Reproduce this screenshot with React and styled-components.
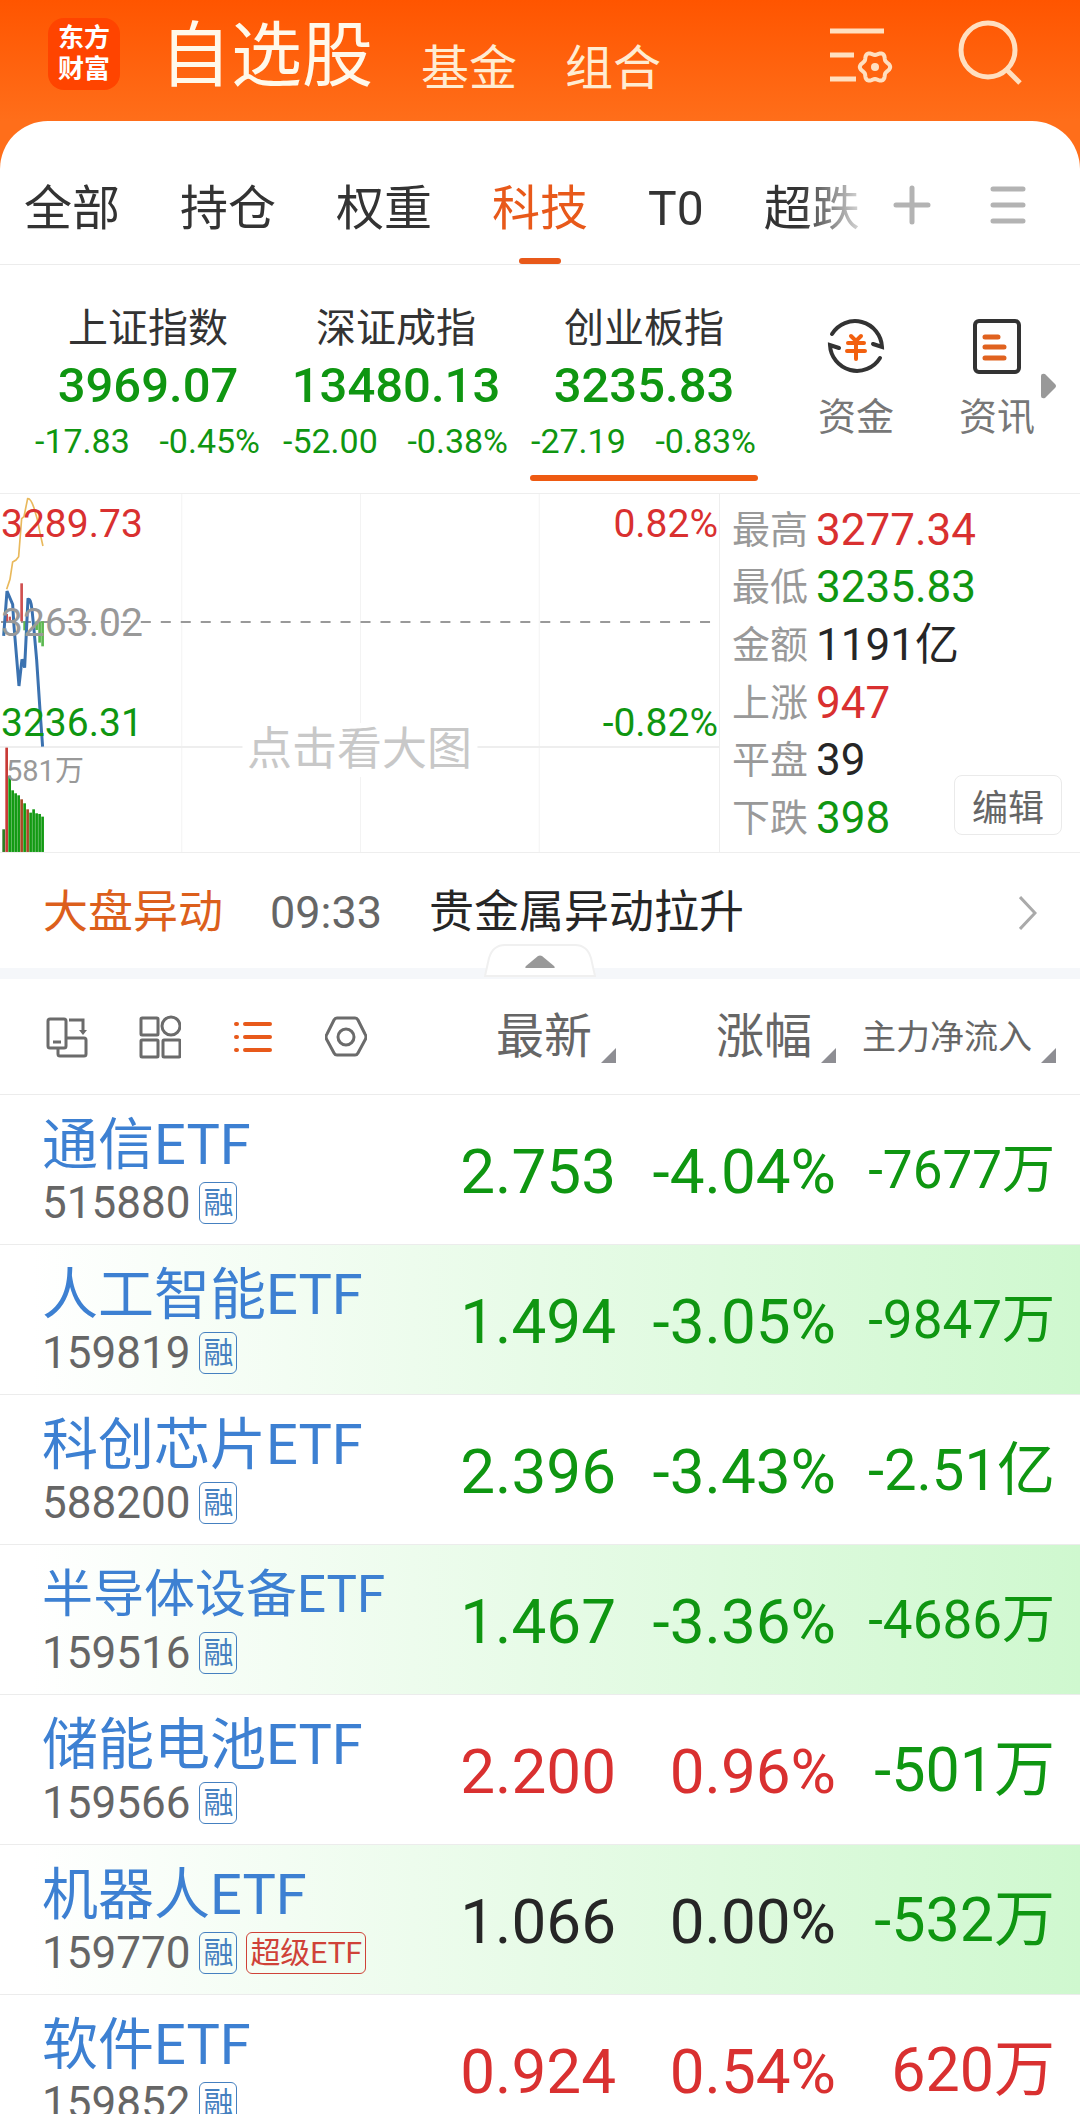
import React, { useState } from "react";
import styled, { createGlobalStyle } from "styled-components";

const GREEN = "#0f9611";
const RED = "#d93030";
const ORANGE = "#e8591a";

const tones = { up: RED, down: GREEN, flat: "#262626", muted: "#999" };

const GlobalStyle = createGlobalStyle`
  * {
    box-sizing: border-box;
  }
  body {
    margin: 0;
    background: #fff;
    color: #333;
    font-family: Roboto, "Noto Sans CJK SC", sans-serif;
  }
  button {
    border: 0;
    padding: 0;
    background: none;
    color: inherit;
    font: inherit;
    cursor: pointer;
  }
  svg {
    display: block;
  }
`;

const StyledPage = styled.div`
  height: 100vh;
  overflow: hidden;
`;

/* header */

const StyledTop = styled.div`
  background: linear-gradient(#ff5500, #ff6e1a 121px);
`;

const StyledHeader = styled.header`
  display: flex;
  align-items: flex-start;
  height: 121px;
  padding: 14px 58px 0 48px;
`;

const StyledLogo = styled.div`
  width: 72px;
  height: 72px;
  margin: 4px 40px 0 0;
  padding: 5px 10px;
  border-radius: 16px;
  background: #ff4400;
  color: #fff;
  font-size: 26px;
  font-weight: 700;
  line-height: 31px;
`;

const StyledMainNav = styled.nav`
  display: flex;
  align-items: flex-end;
  gap: 48px;
`;

const StyledMainTab = styled.button`
  color: ${(p) => (p.$active ? "#fff8ea" : "#ffecd2")};
  font-size: ${(p) => (p.$active ? 71 : 48)}px;
  line-height: ${(p) => (p.$active ? 84 : 58)}px;
`;

const StyledHeaderActions = styled.div`
  display: flex;
  gap: 64px;
  margin: 4px 0 0 auto;
`;

/* group tabs */

const StyledTabBar = styled.div`
  display: flex;
  align-items: center;
  height: 144px;
  padding-right: 54px;
  border-bottom: 1px solid #ececec;
  border-radius: 48px 48px 0 0;
  background: #fff;
`;

const StyledTabs = styled.nav`
  display: flex;
  flex: 1;
  gap: 60px;
  height: 143px;
  padding-left: 24px;
  overflow: hidden;
  mask-image: linear-gradient(
    to right,
    #000 calc(100% - 60px),
    rgba(0, 0, 0, 0.2)
  );
`;

const StyledTab = styled.button`
  display: flex;
  flex: none;
  flex-direction: column;
  align-items: center;
  padding-top: 58px;
  color: ${(p) => (p.$active ? ORANGE : "#333")};
  font-size: 48px;
  line-height: 60px;

  &::after {
    content: "";
    width: 42px;
    height: 6px;
    margin-top: 19px;
    border-radius: 3px;
    background: ${(p) => (p.$active ? ORANGE : "transparent")};
  }
`;

const StyledTabTools = styled.div`
  display: flex;
  gap: 59px;
  padding: 24px 0 0 33px;
`;

/* indices */

const StyledIndexBar = styled.section`
  display: flex;
  align-items: flex-start;
  padding: 38px 24px 12px 34px;
`;

const StyledIndexList = styled.div`
  display: flex;
  gap: 20px;
`;

const StyledIndex = styled.button`
  width: 228px;
  color: ${GREEN};
  text-align: center;

  &::after {
    content: "";
    display: block;
    height: 6px;
    margin-top: 10px;
    border-radius: 3px;
    background: ${(p) => (p.$active ? "#ee5a12" : "transparent")};
  }

  > .name {
    color: #333;
    font-size: 40px;
    line-height: 52px;
  }

  > .value {
    font-size: 49px;
    font-weight: 500;
    line-height: 62px;
  }

  > .change {
    display: flex;
    justify-content: space-between;
    padding: 0 2px 0 1px;
    font-size: 34px;
    line-height: 48px;
  }
`;

const StyledShortcuts = styled.div`
  display: flex;
  gap: 65px;
  margin: 13px 6px 0 auto;
`;

const StyledShortcut = styled.button`
  display: flex;
  flex-direction: column;
  align-items: center;
  gap: 17px;
  color: #777;
  font-size: 38px;
  line-height: 48px;
`;

const StyledMore = styled.button`
  align-self: center;
  margin-bottom: 12px;
`;

/* chart and stats */

const StyledMarket = styled.section`
  display: flex;
  height: 360px;
  border: solid #eee;
  border-width: 1px 0;
`;

const StyledChart = styled.div`
  position: relative;
  width: 66.67%;
  border-right: 1px solid #eee;

  > svg {
    width: 100%;
    height: 100%;
  }
`;

const StyledChartLabel = styled.span`
  position: absolute;
  top: ${(p) => p.$top}px;
  ${(p) => (p.$right ? "right: 1px" : "left: 1px")};
  color: ${(p) => tones[p.$tone]};
  font-size: 39px;
  line-height: 46px;
`;

const StyledVolumeLabel = styled.span`
  position: absolute;
  top: 260px;
  left: 6px;
  color: #999;
  font-size: 29px;
  line-height: 34px;
`;

const StyledChartHint = styled.span`
  position: absolute;
  top: 229px;
  left: 50%;
  padding: 0 5px;
  background: #fff;
  color: #c8c8c8;
  font-size: 45px;
  line-height: 54px;
  white-space: nowrap;
  transform: translateX(-50%);
`;

const StyledStats = styled.div`
  display: flex;
  flex: 1;
  align-items: flex-end;
  justify-content: space-between;
  padding: 0 18px 0 12px;
`;

const StyledStatList = styled.dl`
  display: grid;
  grid-template-columns: auto auto;
  grid-auto-rows: 1fr;
  column-gap: 8px;
  align-items: center;
  height: 100%;
  margin: 0;
  padding: 7px 0 5px;
  line-height: 56px;
  white-space: nowrap;

  > dt {
    color: #999;
    font-size: 38px;
  }
`;

const StyledStatValue = styled.dd`
  margin: 0;
  color: ${(p) => tones[p.$tone]};
  font-size: 44px;
`;

const StyledEdit = styled.button`
  width: 108px;
  height: 60px;
  margin: 0 0 17px -60px;
  border: 1px solid #eaeaea;
  border-radius: 8px;
  color: #666;
  font-size: 36px;
`;

/* news */

const StyledNews = styled.section`
  position: relative;
  display: flex;
  align-items: center;
  gap: 47px;
  height: 126px;
  padding: 4px 43px 0;
  border-bottom: 11px solid #f5f7fa;
  font-size: 45px;
  line-height: 58px;

  > .tag {
    color: #dc5f1c;
  }

  > time {
    color: #666;
  }

  > a {
    flex: 1;
    color: #262626;
    text-decoration: none;
  }
`;

const StyledCollapse = styled.button`
  position: absolute;
  bottom: -9px;
  left: 50%;
  transform: translateX(-50%);
`;

/* quotes */

const StyledTable = styled.table`
  width: 100%;
  table-layout: fixed;
  border-spacing: 0;
`;

const StyledToolHead = styled.th`
  height: 115px;
  padding: 0 0 0 46px;

  > div {
    display: flex;
    gap: 51px;
  }
`;

const StyledSortHead = styled.th`
  width: ${(p) => p.$width}px;
  padding: 0 ${(p) => (p.$last ? 24 : 0)}px 0 0;
  color: #666;
  font-size: ${(p) => (p.$small ? 34 : 48)}px;
  font-weight: 400;
  line-height: 60px;
  white-space: nowrap;

  > button {
    display: flex;
    align-items: flex-end;
    justify-content: flex-end;
    gap: 9px;
    width: 100%;
  }

  svg {
    flex: none;
    margin-bottom: 4px;
  }
`;

const StyledRow = styled.tr`
  height: 150px;
  background: ${(p) =>
    p.$shaded
      ? "linear-gradient(to right, #fff 3%, #e7fbe7 50%, #cff8cf)"
      : "#fff"};

  > td {
    padding: 0;
    border-top: 1px solid #ececec;
  }
`;

const StyledNameCell = styled.td`
  && {
    padding: 19px 0 14px 42px;
    white-space: nowrap;
  }

  > a {
    display: block;
    color: #3d80d2;
    font-size: ${(p) => (p.$long ? 51 : 56)}px;
    line-height: 62px;
    text-decoration: none;
  }

  > div {
    display: flex;
    align-items: center;
    gap: 9px;
    height: 54px;
    color: #666;
    font-size: 44px;
  }
`;

const StyledBadge = styled.span`
  height: 42px;
  padding: 0 3px;
  border: 1px solid currentColor;
  border-radius: 6px;
  color: ${(p) => (p.$red ? "#cf4238" : "#4580c0")};
  font-size: 30px;
  line-height: 40px;
`;

const StyledNumber = styled.td`
  && {
    padding-top: 5px;
  }
  color: ${(p) => tones[p.$tone]};
  font-size: 62px;
  line-height: 72px;
  text-align: right;
  white-space: nowrap;
`;

// long amounts get a smaller size so that they stay inside the column
const flowSize = (text) => {
  if (/\d{4}/.test(text)) return 53;
  return text.length > 5 ? 58 : 61;
};

const StyledFlow = styled.td`
  && {
    padding-right: 25px;
  }
  color: ${(p) => tones[p.$tone]};
  font-size: ${(p) => p.$size}px;
  line-height: 72px;
  text-align: right;
  white-space: nowrap;
`;

const tabs = ["全部", "持仓", "权重", "科技", "T0", "超跌"];

const indices = [
  { name: "上证指数", value: "3969.07", diff: "-17.83", rate: "-0.45%" },
  { name: "深证成指", value: "13480.13", diff: "-52.00", rate: "-0.38%" },
  { name: "创业板指", value: "3235.83", diff: "-27.19", rate: "-0.83%" },
];

const stats = [
  { label: "最高", value: "3277.34", tone: "up" },
  { label: "最低", value: "3235.83", tone: "down" },
  { label: "金额", value: "1191亿", tone: "flat" },
  { label: "上涨", value: "947", tone: "up" },
  { label: "平盘", value: "39", tone: "flat" },
  { label: "下跌", value: "398", tone: "down" },
];

const quotes = [
  { name: "通信ETF", code: "515880", price: "2.753", rate: "-4.04%", flow: "-7677万", tone: "down", flowTone: "down" },
  { name: "人工智能ETF", code: "159819", price: "1.494", rate: "-3.05%", flow: "-9847万", tone: "down", flowTone: "down" },
  { name: "科创芯片ETF", code: "588200", price: "2.396", rate: "-3.43%", flow: "-2.51亿", tone: "down", flowTone: "down" },
  { name: "半导体设备ETF", code: "159516", price: "1.467", rate: "-3.36%", flow: "-4686万", tone: "down", flowTone: "down" },
  { name: "储能电池ETF", code: "159566", price: "2.200", rate: "0.96%", flow: "-501万", tone: "up", flowTone: "down" },
  { name: "机器人ETF", code: "159770", price: "1.066", rate: "0.00%", flow: "-532万", tone: "flat", flowTone: "down", tag: "超级ETF" },
  { name: "软件ETF", code: "159852", price: "0.924", rate: "0.54%", flow: "620万", tone: "up", flowTone: "up" },
];

// volume bars, [top, color]
const volumes = [
  [1050, "#2f7d22"],
  [805, "#c83a36"],
  [890, "#129a12"],
  [933, "#129a12"],
  [942, "#129a12"],
  [948, "#129a12"],
  [960, "#a84a26"],
  [972, "#129a12"],
  [990, "#a84a26"],
  [1000, "#129a12"],
  [990, "#129a12"],
  [1002, "#129a12"],
  [1004, "#129a12"],
  [1012, "#129a12"],
];

// outline of a six-lobed gear
const gearPoints = (cx, cy) =>
  Array.from({ length: 72 }, (_, i) => {
    const a = (i * Math.PI) / 36;
    const r = 13.6 + 1.6 * Math.cos(6 * a);
    return `${(cx + r * Math.cos(a)).toFixed(1)},${(cy + r * Math.sin(a)).toFixed(1)}`;
  }).join(" ");

const FilterIcon = () => (
  <svg width="64" height="64" viewBox="0 0 64 64" fill="none" stroke="#ffdfc0" strokeWidth="5">
    <path d="M0 11h54M0 35h24M0 59h26" />
    <polygon points={gearPoints(45, 47)} strokeWidth="4" strokeLinejoin="round" />
    <circle cx="45" cy="47" r="4" fill="#ffdfc0" stroke="none" />
  </svg>
);

const SearchIcon = () => (
  <svg width="64" height="68" viewBox="0 0 64 68" fill="none" stroke="#ffdfc0" strokeWidth="5">
    <circle cx="30" cy="32" r="27" />
    <path d="M48 51l14 14" />
  </svg>
);

const PlusIcon = () => (
  <svg width="38" height="40" viewBox="0 0 38 40" stroke="#b3b3b3" strokeWidth="5" strokeLinecap="round">
    <path d="M19 3v34M3 20h32" />
  </svg>
);

const MenuIcon = () => (
  <svg width="36" height="40" viewBox="0 0 36 40" stroke="#b3b3b3" strokeWidth="5" strokeLinecap="round">
    <path d="M3 4h30M3 20h30M3 36h30" />
  </svg>
);

const FundIcon = () => (
  <svg width="60" height="60" viewBox="0 0 60 60" fill="none" strokeLinecap="round">
    <g stroke="#333" strokeWidth="4">
      <path d="M6 18A27 27 0 0 1 56 31L47 28" />
      <path d="M54 42A27 27 0 0 1 4 29L13 32" />
    </g>
    <path stroke="#f2600f" strokeWidth="4" d="M25 20l5 5l5-5M30 26v17M22 27h16M21 35h18" />
  </svg>
);

const InfoIcon = () => (
  <svg width="60" height="60" viewBox="0 0 60 60" fill="none" strokeLinecap="round">
    <rect x="8" y="5" width="44" height="51" rx="4" stroke="#333" strokeWidth="4" />
    <path stroke="#e0621f" strokeWidth="5" d="M18 21h13M18 31h19M18 42h19" />
  </svg>
);

const SwapIcon = () => (
  <svg width="42" height="42" viewBox="0 0 42 42" fill="none" stroke="#6b6b6b" strokeWidth="3">
    <rect x="2" y="3" width="18" height="29" rx="2" />
    <path d="M7 26h8M23 4h14v12M21 22h17q2 0 2 2v14q0 2-2 2H14q-2 0-2-2v-5" />
    <path d="M33 14h8l-4 5z" fill="#6b6b6b" stroke="none" />
  </svg>
);

const GridIcon = () => (
  <svg width="42" height="44" viewBox="0 0 42 44" fill="none" stroke="#6b6b6b" strokeWidth="3">
    <rect x="2" y="3" width="17" height="17" rx="1" />
    <circle cx="32" cy="11" r="9" />
    <rect x="2" y="25" width="17" height="17" rx="1" />
    <rect x="24" y="25" width="17" height="17" rx="1" />
  </svg>
);

const ListIcon = () => (
  <svg width="42" height="42" viewBox="0 0 42 42" fill="none" stroke={ORANGE} strokeWidth="4" strokeLinecap="round">
    <path d="M13 8h25M13 21h25M13 34h25M4 8h1M4 21h1M4 34h1" />
  </svg>
);

const SettingIcon = () => (
  <svg width="42" height="42" viewBox="0 0 42 42" fill="none" stroke="#6b6b6b" strokeWidth="3">
    <path strokeLinejoin="round" d="M12 2h18q2 0 3 2l7 14q2 3 0 6l-7 13q-1 2-3 2H12q-2 0-3-2L2 24q-2-3 0-6L9 4q1-2 3-2z" />
    <circle cx="21" cy="21" r="8" />
  </svg>
);

const SortIcon = () => (
  <svg width="15" height="15" viewBox="0 0 15 15">
    <path d="M15 0v15H0z" fill="#8e8e93" />
  </svg>
);

const MarketChart = () => (
  <svg viewBox="0 0 720 358" preserveAspectRatio="none" fill="none">
    <path d="M182 0v358M361 0v358M540 0v358" stroke="#f3f3f3" />
    <path d="M0 253h720" stroke="#eee" strokeWidth="2" />
    <path d="M1 128h712" stroke="#999" strokeWidth="2" strokeDasharray="10 10" />
    <g transform="scale(.3333) translate(0 -44)">
      {volumes.map(([top, color], i) => (
        <rect key={i} x={7 + i * 9} y={top} width="8" height={1118 - top} fill={color} />
      ))}
      <g fill="#d05050">
        <rect x="16" y="404" width="8" height="22" />
        <rect x="26" y="412" width="7" height="14" />
        <rect x="36" y="414" width="7" height="12" />
        <rect x="61" y="312" width="8" height="114" />
      </g>
      <g fill="#5cb850">
        <rect x="70" y="426" width="8" height="27" />
        <rect x="106" y="426" width="8" height="26" />
        <rect x="115" y="426" width="8" height="64" />
        <rect x="124" y="426" width="8" height="75" />
      </g>
      <path
        stroke="#e9b95c"
        strokeWidth="5"
        d="M20 330L30 300L38 248L48 242L56 232L65 118L72 112L83 58Q92 56 102 85L112 120L120 160L129 200"
      />
      <path
        stroke="#3b72b0"
        strokeWidth="9"
        d="M11 470L21 335L38 375L42 440L57 620L66 540L74 565L84 360Q92 356 96 390L102 450L110 540L120 690L128 802"
      />
    </g>
  </svg>
);

const App = () => {
  const [tab, setTab] = useState("科技");
  const [index, setIndex] = useState("创业板指");

  return (
    <StyledPage>
      <GlobalStyle />
      <StyledTop>
        <StyledHeader>
          <StyledLogo>
            东方
            <br />
            财富
          </StyledLogo>
          <StyledMainNav>
            <StyledMainTab $active>自选股</StyledMainTab>
            <StyledMainTab>基金</StyledMainTab>
            <StyledMainTab>组合</StyledMainTab>
          </StyledMainNav>
          <StyledHeaderActions>
            <button aria-label="管理">
              <FilterIcon />
            </button>
            <button aria-label="搜索">
              <SearchIcon />
            </button>
          </StyledHeaderActions>
        </StyledHeader>

        <StyledTabBar>
          <StyledTabs>
            {tabs.map((e) => (
              <StyledTab key={e} $active={e === tab} onClick={() => setTab(e)}>
                {e}
              </StyledTab>
            ))}
          </StyledTabs>
          <StyledTabTools>
            <button aria-label="添加">
              <PlusIcon />
            </button>
            <button aria-label="菜单">
              <MenuIcon />
            </button>
          </StyledTabTools>
        </StyledTabBar>
      </StyledTop>

      <StyledIndexBar>
        <StyledIndexList>
          {indices.map((e) => (
            <StyledIndex key={e.name} $active={e.name === index} onClick={() => setIndex(e.name)}>
              <div className="name">{e.name}</div>
              <div className="value">{e.value}</div>
              <div className="change">
                <span>{e.diff}</span>
                <span>{e.rate}</span>
              </div>
            </StyledIndex>
          ))}
        </StyledIndexList>
        <StyledShortcuts>
          <StyledShortcut>
            <FundIcon />
            资金
          </StyledShortcut>
          <StyledShortcut>
            <InfoIcon />
            资讯
          </StyledShortcut>
        </StyledShortcuts>
        <StyledMore aria-label="更多">
          <svg width="15" height="26" viewBox="0 0 15 26">
            <path d="M0 3q0-3 4-2l10 10q2 2 0 4L4 25q-4 1-4-2z" fill="#999" />
          </svg>
        </StyledMore>
      </StyledIndexBar>

      <StyledMarket>
        <StyledChart>
          <MarketChart />
          <StyledChartHint>点击看大图</StyledChartHint>
          <StyledChartLabel $top={7} $tone="up">3289.73</StyledChartLabel>
          <StyledChartLabel $top={106} $tone="muted">3263.02</StyledChartLabel>
          <StyledChartLabel $top={206} $tone="down">3236.31</StyledChartLabel>
          <StyledChartLabel $top={7} $tone="up" $right>0.82%</StyledChartLabel>
          <StyledChartLabel $top={206} $tone="down" $right>-0.82%</StyledChartLabel>
          <StyledVolumeLabel>581万</StyledVolumeLabel>
        </StyledChart>
        <StyledStats>
          <StyledStatList>
            {stats.map((e) => (
              <React.Fragment key={e.label}>
                <dt>{e.label}</dt>
                <StyledStatValue $tone={e.tone}>{e.value}</StyledStatValue>
              </React.Fragment>
            ))}
          </StyledStatList>
          <StyledEdit>编辑</StyledEdit>
        </StyledStats>
      </StyledMarket>

      <StyledNews>
        <span className="tag">大盘异动</span>
        <time>09:33</time>
        <a href="#news">贵金属异动拉升</a>
        <svg width="18" height="34" viewBox="0 0 18 34" fill="none" stroke="#aaa" strokeWidth="3">
          <path d="M1 1l15 16L1 33" />
        </svg>
        <StyledCollapse aria-label="收起">
          <svg width="112" height="33" viewBox="0 0 112 33">
            <path d="M1 32L5 14Q9 1 21 1H91Q103 1 107 14L111 32z" fill="#fff" stroke="#f0f0f0" strokeWidth="2" />
            <path d="M43 24q-3 0-1-2l12-10q2-1 4 0l12 10q2 2-1 2z" fill="#999" />
          </svg>
        </StyledCollapse>
      </StyledNews>

      <StyledTable>
        <thead>
          <tr>
            <StyledToolHead>
              <div>
                <button aria-label="切换"><SwapIcon /></button>
                <button aria-label="宫格"><GridIcon /></button>
                <button aria-label="列表"><ListIcon /></button>
                <button aria-label="设置"><SettingIcon /></button>
              </div>
            </StyledToolHead>
            <StyledSortHead $width={176}>
              <button>最新<SortIcon /></button>
            </StyledSortHead>
            <StyledSortHead $width={220}>
              <button>涨幅<SortIcon /></button>
            </StyledSortHead>
            <StyledSortHead $width={244} $small $last>
              <button>主力净流入<SortIcon /></button>
            </StyledSortHead>
          </tr>
        </thead>
        <tbody>
          {quotes.map((e, i) => (
            <StyledRow key={e.code} $shaded={i % 2 === 1}>
              <StyledNameCell $long={e.name.length > 7}>
                <a href={`#${e.code}`}>{e.name}</a>
                <div>
                  {e.code}
                  <StyledBadge>融</StyledBadge>
                  {e.tag && <StyledBadge $red>{e.tag}</StyledBadge>}
                </div>
              </StyledNameCell>
              <StyledNumber $tone={e.tone}>{e.price}</StyledNumber>
              <StyledNumber $tone={e.tone}>{e.rate}</StyledNumber>
              <StyledFlow $tone={e.flowTone} $size={flowSize(e.flow)}>{e.flow}</StyledFlow>
            </StyledRow>
          ))}
        </tbody>
      </StyledTable>
    </StyledPage>
  );
};

export default App;
